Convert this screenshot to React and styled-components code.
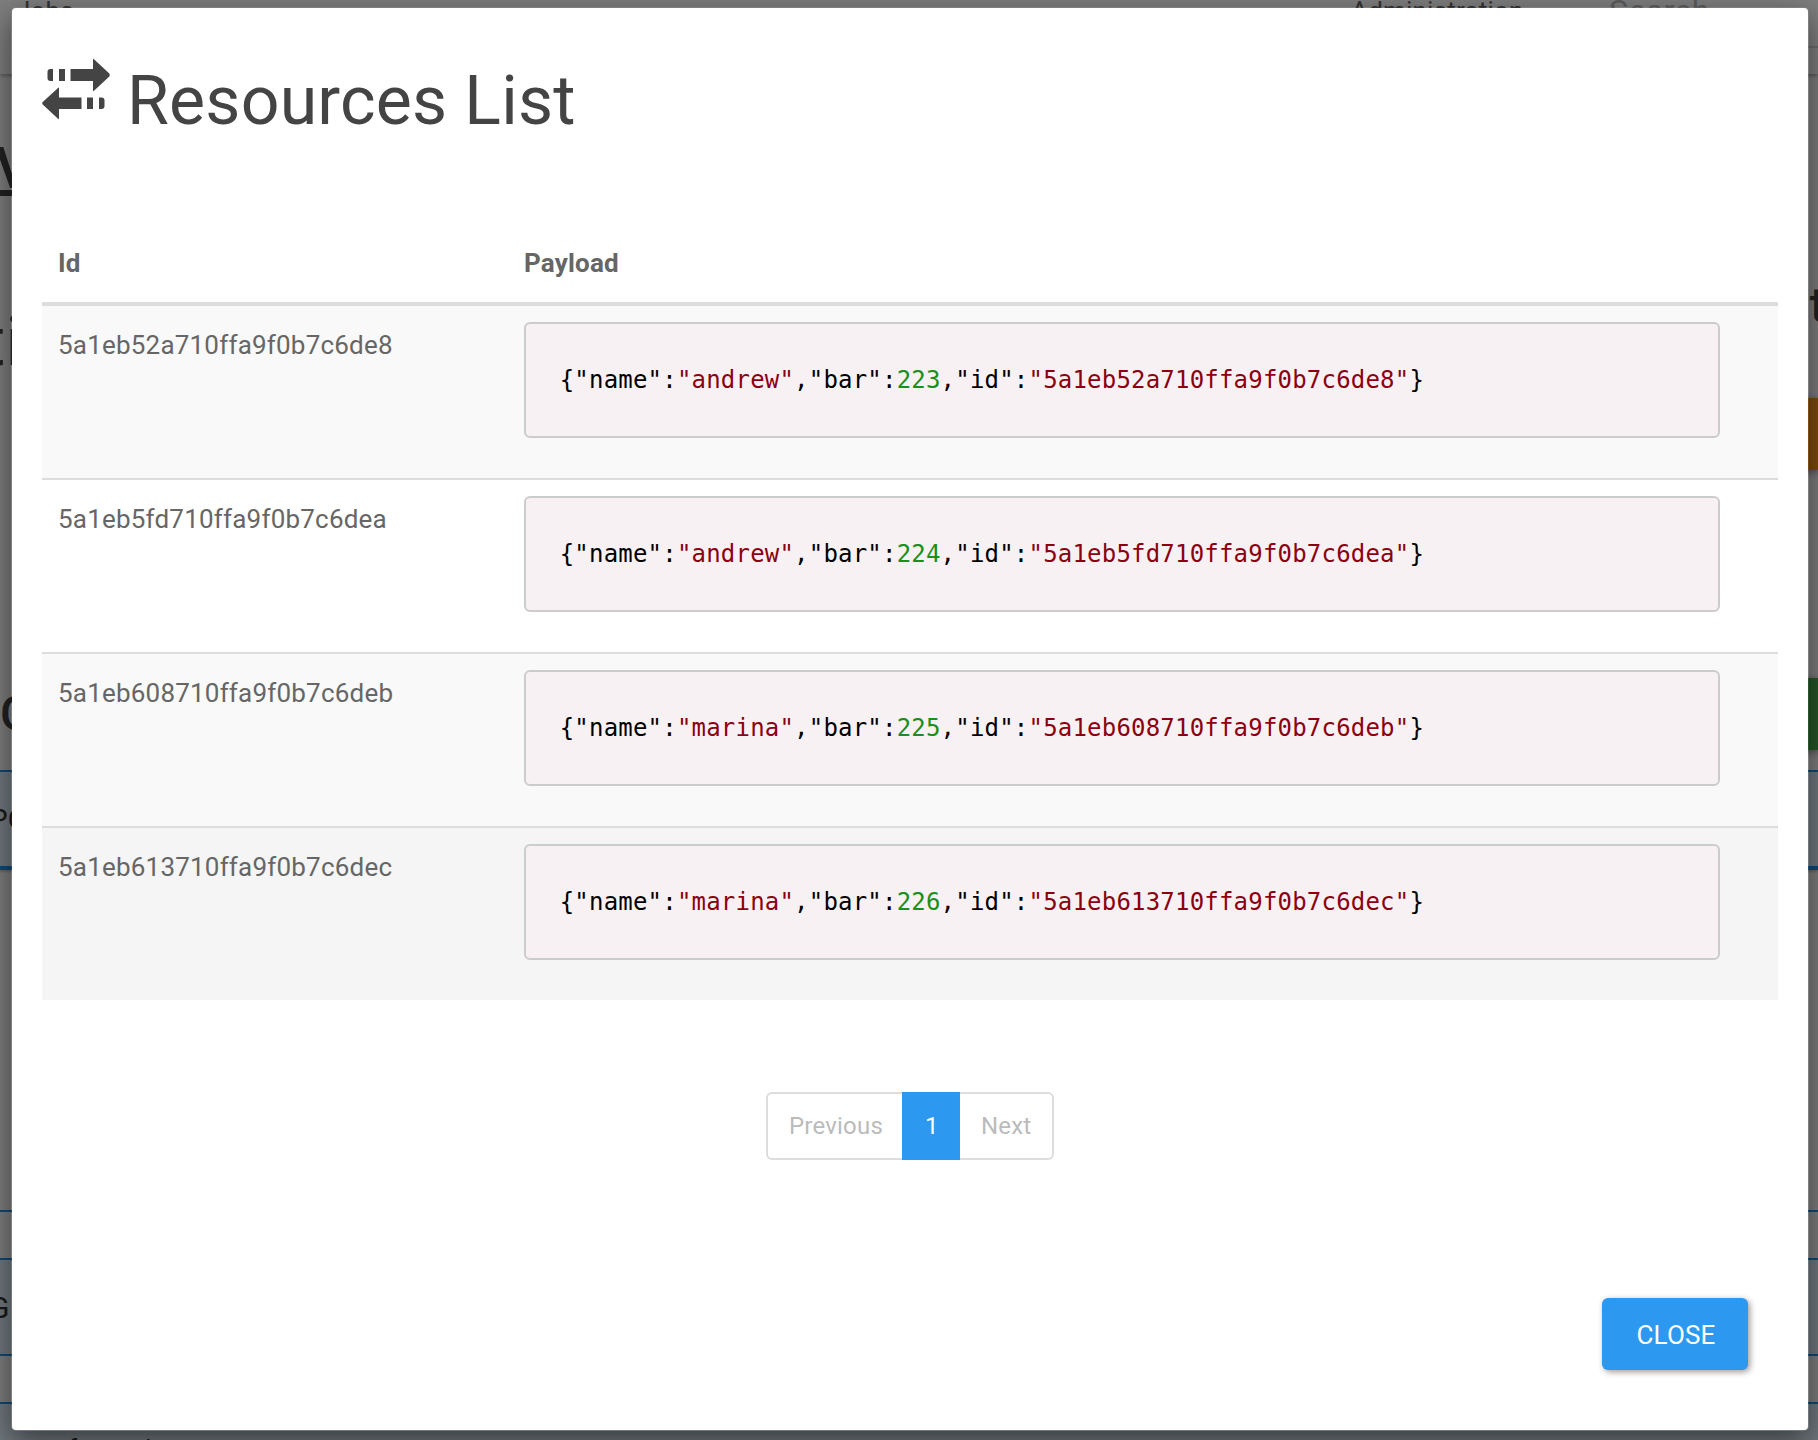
import React from 'react';
import styled, { createGlobalStyle } from 'styled-components';

const GlobalStyle = createGlobalStyle`
  * { box-sizing: border-box; }
  html, body { margin: 0; padding: 0; height: 100%; overflow: hidden; }
  body {
    font-family: Roboto, "Liberation Sans", sans-serif;
    font-size: 26px;
    line-height: 44px;
    letter-spacing: 0.2px;
    color: #666;
    background: #fff;
  }
`;

const Screen = styled.div`
  position: relative;
  width: 1818px;
  height: 1440px;
  overflow: hidden;
  background: #fff;
`;

/* Page underneath the dialog */
const Page = styled.div`
  display: flex;
  flex-direction: column;
  height: 100%;
`;

const Navbar = styled.nav`
  display: flex;
  flex: none;
  height: 74px;
  padding-left: 16px;
  box-shadow: 0 2px 4px rgba(0, 0, 0, 0.3);
`;

const NavItem = styled.span`
  flex: none;
  width: ${(p) => p.$width}px;
  margin-top: -11px;
  white-space: nowrap;
`;

const SearchField = styled.div`
  flex: 1;
  height: 48px;
  border-bottom: 2px solid #ddd;
  font-size: 32px;
  line-height: 22px;
  letter-spacing: 0.4px;
  color: #bbb;
`;

const Heading = styled.div`
  display: flex;
  flex: none;
  height: ${(p) => p.$height}px;
  margin-top: ${(p) => p.$top || 0}px;
  font-size: ${(p) => p.$size}px;
  font-weight: ${(p) => p.$weight || 500};
  line-height: ${(p) => p.$height}px;
  color: #444;
  white-space: nowrap;
`;

const Shift = styled.span`
  margin-left: ${(p) => p.$x || 0}px;
  margin-right: ${(p) => p.$right || 0}px;
  text-decoration: ${(p) => (p.$underline ? 'underline' : 'none')};
  text-decoration-thickness: 6px;
  text-underline-offset: 2px;
  text-decoration-skip-ink: none;
`;

const SplitRow = styled.div`
  display: flex;
  flex: none;
  justify-content: space-between;
  height: ${(p) => p.$height}px;
  line-height: ${(p) => p.$height}px;
`;

const Action = styled.div`
  width: 120px;
  height: 72px;
  background: ${(p) => p.$color};
  box-shadow: 2px 2px 8px rgba(0, 0, 0, 0.4);
`;

const Spacer = styled.div`
  flex: none;
  height: ${(p) => p.$height}px;
`;

const Band = styled.div`
  flex: none;
  height: ${(p) => p.$height}px;
  overflow: hidden;
  padding-left: ${(p) => p.$indent || 0}px;
  border-top: 2px solid #2196f3;
  border-bottom: ${(p) => p.$bottom || 0}px solid #2196f3;
  background: ${(p) => (p.$plain ? '#fff' : '#e3f2fd')};
  box-shadow: ${(p) => (p.$bottom === 4 ? '0 2px 2px rgba(0,0,0,.2)' : 'none')};
  font-size: ${(p) => p.$size || 28}px;
  line-height: ${(p) => p.$line || 96}px;
  word-spacing: 6px;
  color: #333;
`;

/* Dialog */
const Backdrop = styled.div`
  position: absolute;
  inset: 0;
  padding: 6px 8px 8px 10px;
  background: rgba(0, 0, 0, 0.5);
`;

const Dialog = styled.section`
  display: flex;
  flex-direction: column;
  width: 1800px;
  height: 1426px;
  padding: 0 30px;
  border: 2px solid transparent;
  border-radius: 6px;
  background: #fff;
  background-clip: padding-box;
  box-shadow: 0 10px 30px rgba(0, 0, 0, 0.5);
`;

const Title = styled.h3`
  display: flex;
  align-items: flex-start;
  height: 216px;
  margin: 0;
  padding-top: 50px;
  font-size: 68px;
  font-weight: 400;
  line-height: 86px;
  color: #444;
`;

const TransferIcon = styled.svg`
  flex: none;
  width: 70px;
  height: 64px;
  margin: 0 15px 0 0;
  fill: #444;
`;

const HeaderRow = styled.div`
  display: grid;
  grid-template-columns: 466px 1fr;
  height: 82px;
  padding: 17px 16px 0;
  border-bottom: 4px solid #ddd;
  font-weight: 700;
`;

const Row = styled.div`
  display: grid;
  grid-template-columns: 466px 1196px;
  align-items: start;
  height: ${(p) => (p.$first ? 172 : 174)}px;
  padding: 16px 16px 0;
  border-top: ${(p) => (p.$first ? 0 : 2)}px solid #ddd;
  background: ${(p) => p.$bg};
`;

const IdCell = styled.div`
  line-height: 46px;
`;

const Payload = styled.pre`
  height: 116px;
  margin: 0;
  padding: 0 33.7px;
  border: 2px solid #ccc;
  border-radius: 6px;
  background: #f8f1f4;
  font-family: "DejaVu Sans Mono", monospace;
  font-size: 24px;
  line-height: 112px;
  color: #000;
`;

const Token = styled.span`
  color: ${(p) => (p.$kind === 'number' ? '#1a8f1a' : '#8b0010')};
`;

const Pagination = styled.nav`
  display: flex;
  align-self: center;
  height: 68px;
  margin: 92px 0 0;
`;

const PageLink = styled.span`
  width: ${(p) => p.$width}px;
  padding-left: ${(p) => p.$pad}px;
  border: 2px solid ${(p) => (p.$active ? '#2c98f0' : '#ddd')};
  border-left-width: ${(p) => (p.$side === 'right' ? 0 : 2)}px;
  border-right-width: ${(p) => (p.$side === 'left' ? 0 : 2)}px;
  border-radius: ${(p) =>
    p.$side === 'left' ? '6px 0 0 6px' : p.$side === 'right' ? '0 6px 6px 0' : '0'};
  background: ${(p) => (p.$active ? '#2c98f0' : '#fff')};
  color: ${(p) => (p.$active ? '#fff' : '#bbb')};
  font-size: 24px;
  line-height: 64px;
`;

const CloseButton = styled.button`
  align-self: flex-end;
  width: 146px;
  height: 72px;
  margin: 138px 30px 0 0;
  padding: 0 0 0 2px;
  border: 0;
  border-radius: 6px;
  background: #2c98f0;
  box-shadow: 2px 2px 6px rgba(0, 0, 0, 0.4);
  color: #fff;
  font: inherit;
  line-height: 74px;
  letter-spacing: 0.2px;
  text-transform: uppercase;
`;

const resources = [
  { id: '5a1eb52a710ffa9f0b7c6de8', name: 'andrew', bar: 223, bg: '#f9f9f9' },
  { id: '5a1eb5fd710ffa9f0b7c6dea', name: 'andrew', bar: 224, bg: '#fff' },
  { id: '5a1eb608710ffa9f0b7c6deb', name: 'marina', bar: 225, bg: '#f9f9f9' },
  { id: '5a1eb613710ffa9f0b7c6dec', name: 'marina', bar: 226, bg: '#f5f5f5' },
];

function Transfer() {
  return (
    <TransferIcon viewBox="42 58 70 64">
      <path d="M53 69h-2.5q-3 0-3 3v6q0 3 3 3H53zM59 69h6v12h-6zM70.5 69H93V59.5q0-1.2 1-.2l15.3 14.3q1 1.4 0 2.8L94 90.8q-1 .8-1-.3V81H70.5z" />
      <path d="M99 109h2.5q3 0 3-3v-5.500q0-3-3-3H99zM93 109h-6V97.500h6zM81.500 109H59v9.500q0 1.200-1 .2L42.700 104.600q-1-1.200 0-2.600L58 88q1-1 1 .2v9.300h22.500z" />
    </TransferIcon>
  );
}

export default function App() {
  return (
    <>
      <GlobalStyle />
      <Screen>
        <Page>
          <Navbar>
            <NavItem $width={1335}>Jobs</NavItem>
            <NavItem $width={258}>Administration</NavItem>
            <SearchField>Search</SearchField>
          </Navbar>
          <Heading $top={58} $height={72} $size={58}>
            <Shift $x={-5} $underline>V</Shift>
          </Heading>
          <SplitRow $height={194}>
            <Heading $top={98} $height={80} $size={68} $weight={400}>
              <Shift $x={-17}>ti</Shift>
            </Heading>
            <Heading $top={70} $height={64} $size={48}>
              <Shift $right={-8}>t</Shift>
            </Heading>
          </SplitRow>
          <SplitRow $height={280}>
            <span />
            <Action $color="#fc9620" />
          </SplitRow>
          <SplitRow $height={92}>
            <Heading $top={4} $height={64} $size={48}>
              <Shift>C</Shift>
            </Heading>
            <Action $color="#4caf50" />
          </SplitRow>
          <Band $height={100} $bottom={4}>
            <Shift $x={-10}>PO</Shift>
          </Band>
          <Spacer $height={340} />
          <Band $height={48} $plain />
          <Band $height={98} $bottom={2} $size={30}>
            <Shift $x={-11}>G</Shift>
          </Band>
          <Spacer $height={46} />
          <Band $height={38} $indent={68} $size={26} $line={91}>f o o b a r</Band>
        </Page>
        <Backdrop>
          <Dialog>
            <Title>
              <Transfer />
              Resources List
            </Title>
            <HeaderRow>
              <span>Id</span>
              <span>Payload</span>
            </HeaderRow>
            {resources.map((r, i) => (
              <Row key={r.id} $first={i === 0} $bg={r.bg}>
                <IdCell>{r.id}</IdCell>
                <Payload>
                  {'{"name":'}
                  <Token>{`"${r.name}"`}</Token>
                  {',"bar":'}
                  <Token $kind="number">{r.bar}</Token>
                  {',"id":'}
                  <Token>{`"${r.id}"`}</Token>
                  {'}'}
                </Payload>
              </Row>
            ))}
            <Pagination>
              <PageLink $width={136} $pad={21} $side="left">Previous</PageLink>
              <PageLink $width={58} $pad={21} $active>1</PageLink>
              <PageLink $width={94} $pad={21} $side="right">Next</PageLink>
            </Pagination>
            <CloseButton>Close</CloseButton>
          </Dialog>
        </Backdrop>
      </Screen>
    </>
  );
}
